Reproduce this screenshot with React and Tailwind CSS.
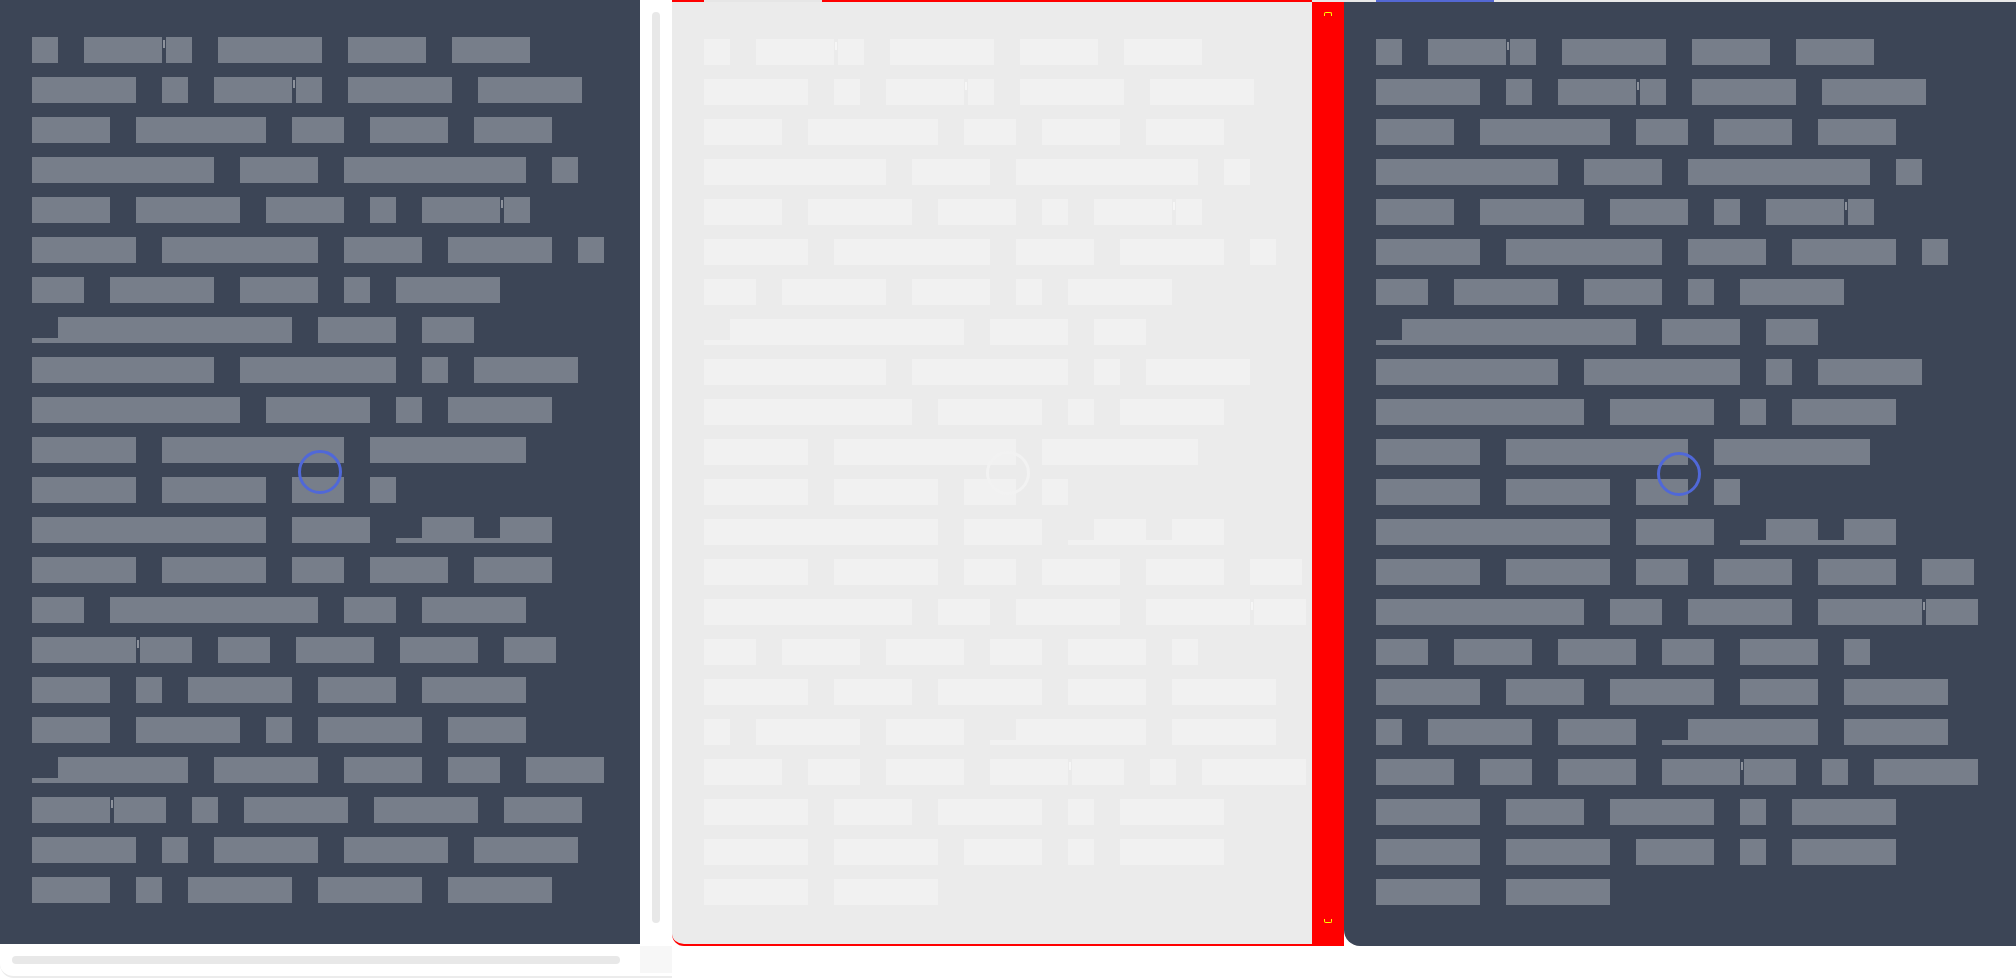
import React from "react";

const UNIT = 26;

// shared lines, first 13 rows are the same on both sides
const common = [
	"x xxx'x xxxx xxx xxx",
	"xxxx x xxx'x xxxx xxxx",
	"xxx xxxxx xx xxx xxx",
	"xxxxxxx xxx xxxxxxx x",
	"xxx xxxx xxx x xxx'x",
	"xxxx xxxxxx xxx xxxx x",
	"xx xxxx xxx x xxxx",
	"_xxxxxxxxx xxx xx",
	"xxxxxxx xxxxxx x xxxx",
	"xxxxxxxx xxxx x xxxx",
	"xxxx xxxxxxx xxxxxx",
	"xxxx xxxx xx x",
	"xxxxxxxxx xxx _xx_xx",
];

const before = [
	...common,
	"xxxx xxxx xx xxx xxx",
	"xx xxxxxxxx xx xxxx",
	"xxxx'xx xx xxx xxx xx",
	"xxx x xxxx xxx xxxx",
	"xxx xxxx x xxxx xxx",
	"_xxxxx xxxx xxx xx xxx",
	"xxx'xx x xxxx xxxx xxx",
	"xxxx x xxxx xxxx xxxx",
	"xxx x xxxx xxxx xxxx",
];

const after = [
	...common,
	"xxxx xxxx xx xxx xxx xx",
	"xxxxxxxx xx xxxx xxxx'xx",
	"xx xxx xxx xx xxx x",
	"xxxx xxx xxxx xxx xxxx",
	"x xxxx xxx _xxxxx xxxx",
	"xxx xx xxx xxx'xx x xxxx",
	"xxxx xxx xxxx x xxxx",
	"xxxx xxxx xxx x xxxx",
	"xxxx xxxx",
];

const tones = {
	dark: { block: "bg-[#777e8a]", tick: "bg-[#8d929c]" },
	light: { block: "bg-[#f1f1f1]", tick: "bg-[#f6f6f6]" },
};

const parse = (text) => {
	const parts = [];
	let i = 0;
	while (i < text.length) {
		const c = text[i];
		if (c === "x") {
			let j = i;
			while (text[j] === "x") j++;
			parts.push({ type: "block", n: j - i });
			i = j;
		} else {
			parts.push({ type: c === " " ? "space" : c === "'" ? "tick" : "under" });
			i++;
		}
	}
	return parts;
};

const Line = ({ text, tone }) => {
	const t = tones[tone];
	return (
		<div className="flex h-[26px]">
			{parse(text).map((p, idx) => {
				if (p.type === "block")
					return <span key={idx} className={`block h-full ${t.block}`} style={{ width: p.n * UNIT }} />;
				if (p.type === "space") return <span key={idx} className="block w-[26px] shrink-0" />;
				if (p.type === "tick")
					return (
						<span key={idx} className="block w-[4px] shrink-0">
							<span className={`block ml-[1px] mt-[3px] w-[2px] h-[8px] ${t.tick}`} />
						</span>
					);
				return (
					<span key={idx} className="flex w-[26px] shrink-0 items-end">
						<span className={`block w-full h-[5px] ${t.block}`} />
					</span>
				);
			})}
		</div>
	);
};

const Code = ({ lines, tone }) => (
	<div className="flex flex-col gap-[14px]">
		{lines.map((l, i) => (
			<Line key={i} text={l} tone={tone} />
		))}
	</div>
);

const App = () => {
	return (
		<div className="flex h-[978px] w-[2016px] overflow-hidden bg-white font-['Liberation_Sans',sans-serif]">
			{/* original side + scrollbars */}
			<div className="flex h-[978px] w-[672px] shrink-0 rounded-bl-[14px] border-b-2 border-[#ececec]">
				<div className="flex w-[640px] flex-col">
					<div className="relative h-[944px] bg-[#3c4556] pl-8 pt-[37px]">
						<Code lines={before} tone="dark" />
						<div className="absolute left-[298px] top-[450px] h-[44px] w-[44px] rounded-full border-[3px] border-[#5068d8]" />
					</div>
					<div className="px-3 pt-3">
						<div className="h-2 w-[608px] rounded-full bg-[#e8e8e8]" />
					</div>
				</div>
				<div className="flex w-[32px] flex-col">
					<div className="ml-3 mt-3 h-[911px] w-2 rounded-full bg-[#e8e8e8]" />
					<div className="mb-[3px] mt-auto h-[27px] bg-[#f7f7f7]" />
				</div>
			</div>

			{/* overlay side */}
			<div className="flex w-[640px] shrink-0 flex-col">
				<div className="flex h-[2px]">
					<div className="w-[32px] bg-[#ff0000]" />
					<div className="w-[118px] bg-[#e6e6e6]" />
					<div className="flex-1 bg-[#ff0000]" />
				</div>
				<div className="relative h-[944px] rounded-bl-[12px] border-b-2 border-[#ff0000] bg-[#ebebeb] pl-8 pt-[37px]">
					<Code lines={after} tone="light" />
					<div className="absolute left-[314px] top-[449px] h-[44px] w-[44px] rounded-full border-[3px] border-[#f2f2f2]" />
				</div>
			</div>

			{/* divider */}
			<div className="flex w-[32px] shrink-0 flex-col">
				<div className="h-[2px] bg-[#e9e9e9]" />
				<div className="relative h-[944px] bg-[#ff0000]">
					<span className="absolute left-[12px] top-[10px] h-[4px] w-[8px] rounded-t-[2px] border-x border-t border-[#ffff00]" />
					<span className="absolute left-[12px] top-[917px] h-[4px] w-[8px] rounded-b-[2px] border-x border-b border-[#ffff00]" />
				</div>
			</div>

			{/* new side */}
			<div className="flex w-[672px] shrink-0 flex-col">
				<div className="flex h-[2px] bg-[#e9e9e9]">
					<div className="ml-8 w-[118px] bg-[#5468d4]" />
				</div>
				<div className="relative h-[944px] rounded-bl-[16px] bg-[#3c4556] pl-8 pt-[37px]">
					<Code lines={after} tone="dark" />
					<div className="absolute left-[313px] top-[450px] h-[44px] w-[44px] rounded-full border-[3px] border-[#5068d8]" />
				</div>
			</div>
		</div>
	);
};

export default App;
